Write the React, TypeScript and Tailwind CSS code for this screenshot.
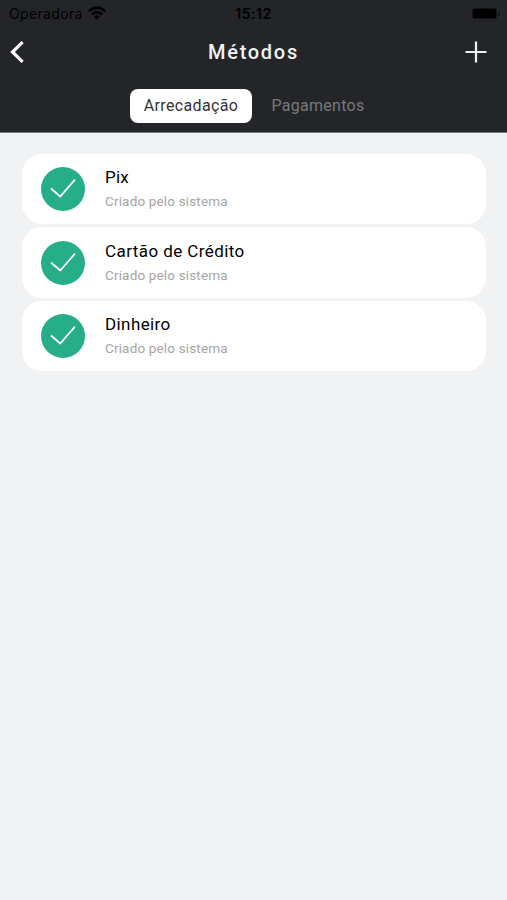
import React from 'react';

const WifiIcon: React.FC = () => (
  <svg width="18" height="14" viewBox="0 0 18 14" fill="black" className="-mt-[2px] ml-[5px]">
    <path d="M0 4.4 C5 -1.2 13 -1.2 18 4.4 L16.1 6.3 C12.2 2.1 5.8 2.1 1.9 6.3 Z" />
    <path d="M3.1 7.6 C6.4 4.1 11.6 4.1 14.9 7.6 L13 9.5 C10.8 7.2 7.2 7.2 5 9.5 Z" />
    <path d="M6.1 10.7 C7.7 9.1 10.3 9.1 11.9 10.7 L9 13.7 Z" />
  </svg>
);

const CheckIcon: React.FC = () => (
  <svg width="44" height="44" viewBox="0 0 44 44" fill="none">
    <path
      d="M10.5 22 L19.3 29.5 L33.5 13.2"
      stroke="white"
      strokeWidth="1.8"
      strokeLinecap="round"
      strokeLinejoin="round"
    />
  </svg>
);

const Methods: React.FC = () => {
  const methods = [
    {
      id: 1,
      name: 'Pix',
      tracking: 'tracking-[0.2px]',
      description: 'Criado pelo sistema'
    },
    {
      id: 2,
      name: 'Cartão de Crédito',
      tracking: 'tracking-[0.42px]',
      description: 'Criado pelo sistema'
    },
    {
      id: 3,
      name: 'Dinheiro',
      tracking: 'tracking-[0.4px]',
      description: 'Criado pelo sistema'
    }
  ];

  return (
    <div className="flex h-[900px] w-[507px] flex-col overflow-hidden bg-[#f0f2f4] font-['Roboto',sans-serif]">
      <header className="h-[133px] shrink-0 border-b border-[#77787b] bg-[#232529]">
        <div className="grid h-[27px] grid-cols-3 items-center text-[14px] leading-none text-black">
          <div className="flex items-center pl-[9px]">
            <span className="font-['Inter',sans-serif] tracking-[0.35px]">Operadora</span>
            <WifiIcon />
          </div>
          <span className="text-center font-['Inter',sans-serif] font-semibold tracking-[0.5px]">15:12</span>
          <div className="flex items-center justify-end pr-[7px]">
            <div className="h-[11px] w-[25px] rounded-[3px] border border-[#111214] bg-black" />
            <div className="ml-px h-1 w-[2px] rounded-r bg-[#111214]" />
          </div>
        </div>

        <div className="grid h-[50px] grid-cols-3 items-center">
          <button className="pl-[10px]" aria-label="Voltar">
            <svg width="15" height="24" viewBox="0 0 15 24" fill="none">
              <path d="M12.6 2.2 L2.5 12 L12.6 21.8" stroke="white" strokeWidth="3.2" />
            </svg>
          </button>
          <h1 className="text-center text-[20px] font-medium tracking-[1.7px] text-[#f1f2f4]">Métodos</h1>
          <button className="flex justify-end pr-[20px]" aria-label="Adicionar">
            <svg width="22" height="22" viewBox="0 0 22 22" fill="none">
              <path d="M11 0.5 V21.5 M0.5 11 H21.5" stroke="#eeeff2" strokeWidth="2.2" />
            </svg>
          </button>
        </div>

        <div className="mt-[12px] flex justify-center pl-[2px]">
          <button className="h-[34px] w-[122px] rounded-[8px] bg-white text-[16px] whitespace-nowrap tracking-[0.35px] text-[#333539]">
            Arrecadação
          </button>
          <button className="ml-[5px] h-[34px] w-[122px] text-[16px] whitespace-nowrap tracking-[0.3px] text-[#797a7e]">
            Pagamentos
          </button>
        </div>
      </header>

      <main className="flex flex-col gap-[3px] pt-[21px] pr-[21px] pl-[22px]">
        {methods.map((method) => (
          <div key={method.id} className="flex h-[70.4px] items-center rounded-[20px] bg-white pl-[19px]">
            <div className="h-[44px] w-[44px] shrink-0 rounded-full bg-[#25ae88]">
              <CheckIcon />
            </div>
            <div className="ml-[20px]">
              <p className={`text-[17px] leading-[24px] text-black ${method.tracking}`}>{method.name}</p>
              <p className="text-[13.5px] leading-[24px] tracking-[0.16px] text-[#a5a5a5]">{method.description}</p>
            </div>
          </div>
        ))}
      </main>
    </div>
  );
};

export default Methods;
